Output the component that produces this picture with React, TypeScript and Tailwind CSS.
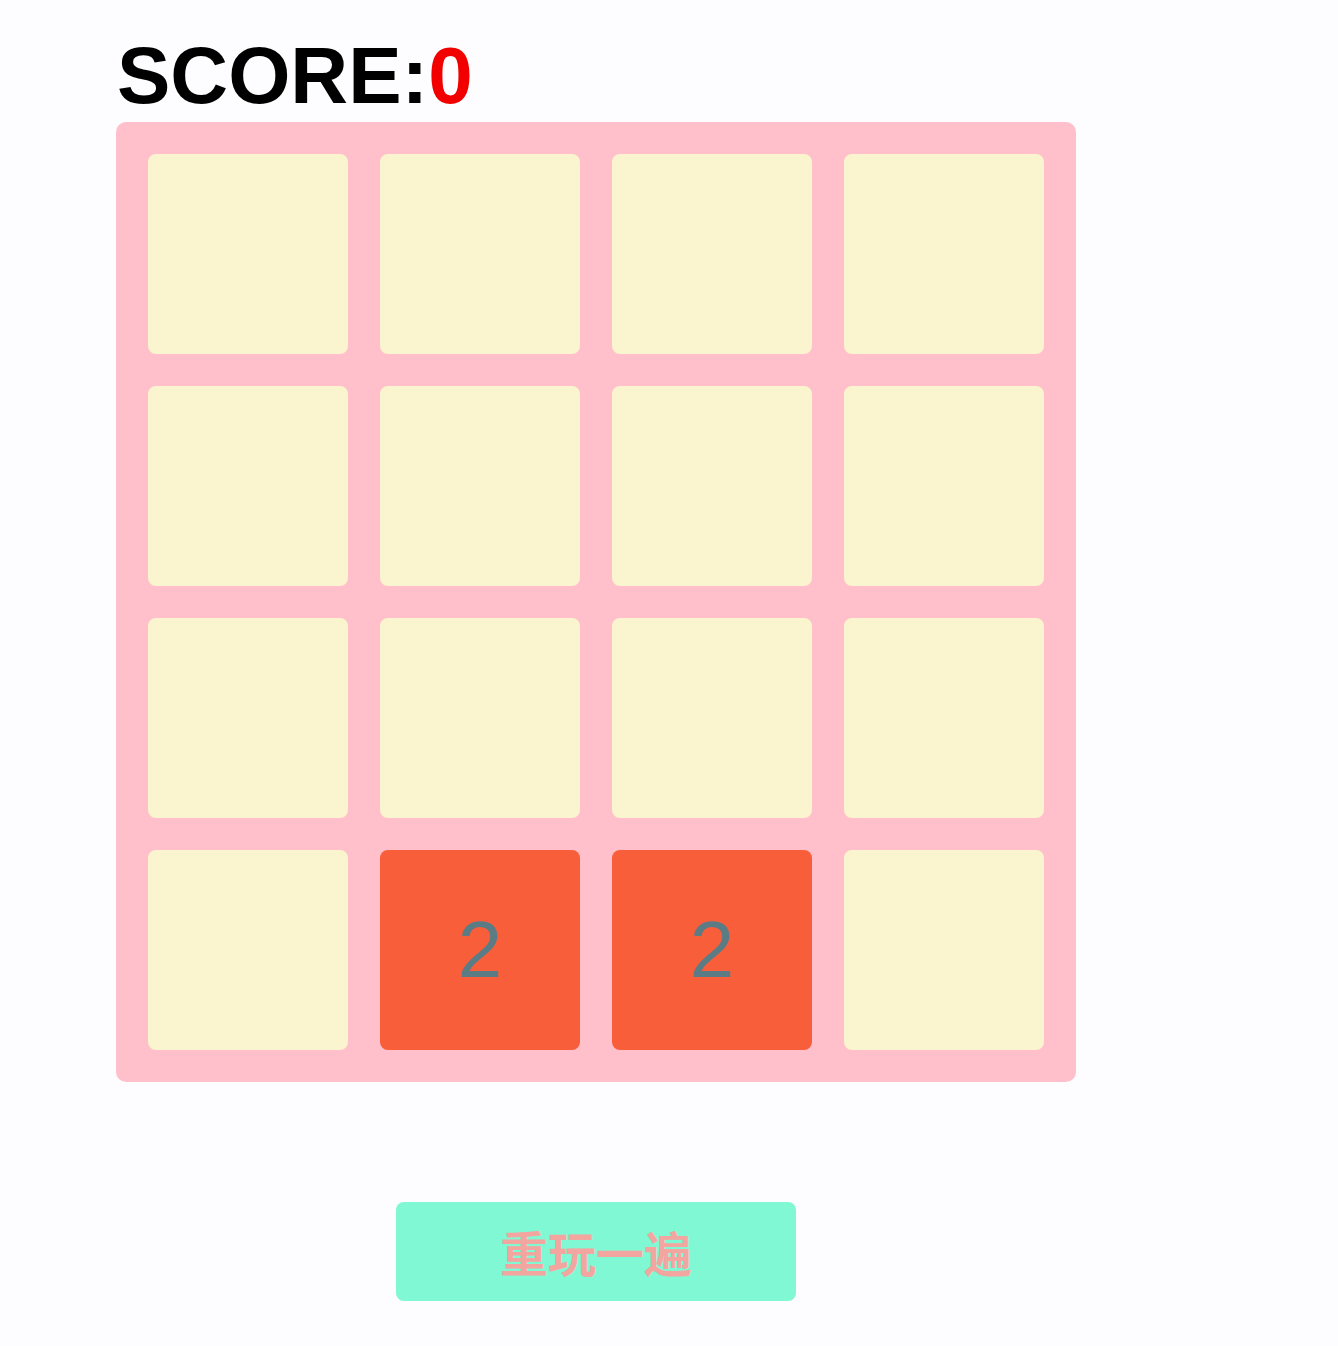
import React from "react";

const board: number[][] = [
  [0, 0, 0, 0],
  [0, 0, 0, 0],
  [0, 0, 0, 0],
  [0, 2, 2, 0],
];

function Tile({ value }: { value: number }) {
  return (
    <div
      className={`w-[200px] h-[200px] rounded-lg flex items-center justify-center text-[80px] leading-none text-[#5b7c84] ${
        value ? "bg-[#f95e3b]" : "bg-[#fbf5cf]"
      }`}
    >
      {value ? value : null}
    </div>
  );
}

export default function App() {
  return (
    <div
      className="min-h-[1346px] bg-[#fdfcfe] pl-[116px] pt-[36px]"
      style={{ fontFamily: '"Liberation Sans", "Noto Sans CJK SC", sans-serif' }}
    >
      <div className="w-[960px]">
        <h1 className="pl-[1px] text-[80px] font-bold leading-none text-black">
          SCORE:<span className="text-[#f20000]">0</span>
        </h1>

        {/* game board */}
        <div className="mt-[6px] rounded-[10px] bg-[#ffc0cb] p-8 grid grid-cols-4 gap-8">
          {board.flat().map((v, i) => (
            <Tile key={i} value={v} />
          ))}
        </div>

        <div className="mt-[120px] flex justify-center">
          <button className="w-[400px] h-[99px] pt-2 rounded-lg bg-[#80f8d4] text-[48px] font-bold text-[#f3a6a0]">
            重玩一遍
          </button>
        </div>
      </div>
    </div>
  );
}
